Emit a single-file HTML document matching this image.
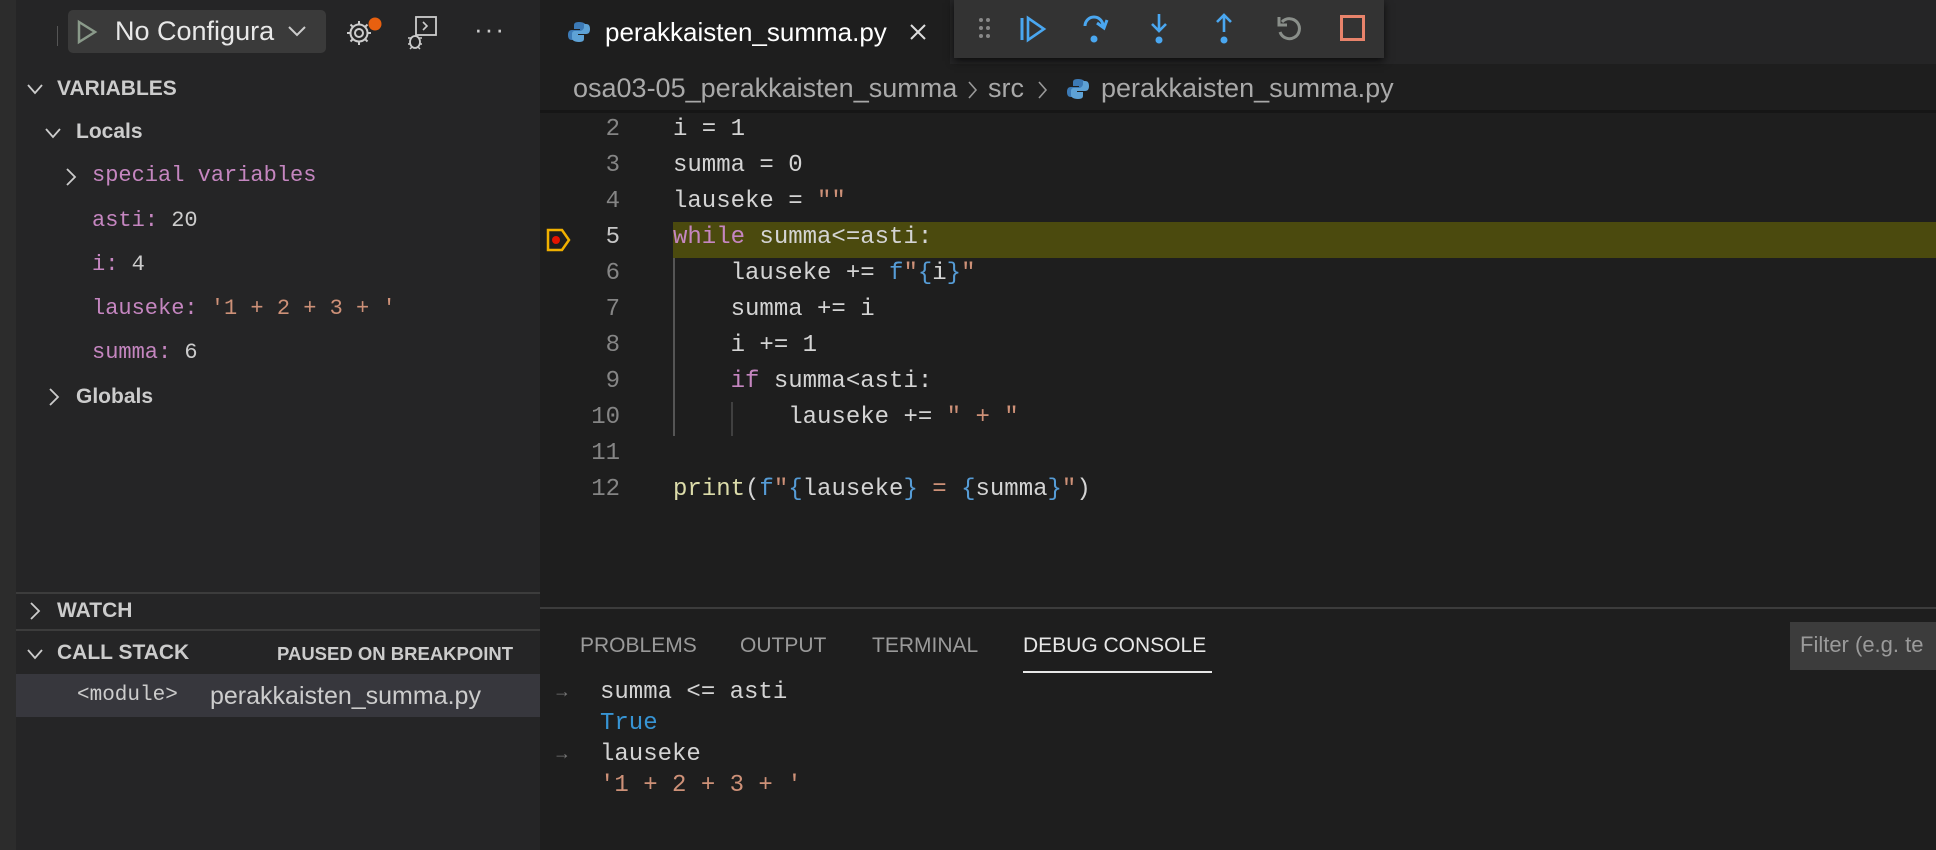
<!DOCTYPE html>
<html><head><meta charset="utf-8"><style>
*{margin:0;padding:0;box-sizing:border-box}
body{width:1936px;height:850px;background:#1e1e1e;position:relative;overflow:hidden;font-family:"Liberation Sans",sans-serif;color:#ccc}
.a{position:absolute;white-space:pre}
.m{font-family:"Liberation Mono",monospace}
.code{font-family:"Liberation Mono",monospace;font-size:24px;color:#d4d4d4;line-height:36px;height:36px;left:673px}
.ln{font-family:"Liberation Mono",monospace;font-size:24px;color:#858585;line-height:36px;width:60px;text-align:right;left:560px}
.k{color:#c586c0}.s{color:#ce9178}.b{color:#569cd6}.y{color:#dcdcaa}.n{color:#b5cea8}
.pu{color:#c586c0}.or{color:#ce9178}
.bc{font-size:26px;color:#a9a9a9;top:73px}
</style></head><body>
<div class="a" style="left:0;top:0;width:16px;height:850px;background:#2c2c2c"></div>
<div class="a" style="left:16px;top:0;width:524px;height:850px;background:#252526"></div>
<div class="a" style="left:57px;top:26px;width:1px;height:20px;background:#555"></div>
<div class="a" style="left:68px;top:10px;width:258px;height:43px;background:#3a3a3a;border-radius:5px"></div>
<svg class="a" style="left:76px;top:19px" width="22" height="26"><path d="M3 3 L19 13 L3 23 Z" fill="none" stroke="#8a9a8a" stroke-width="2.5"/></svg>
<div class="a" style="left:115px;top:16px;font-size:27px;color:#e8e8e8">No Configura</div>
<svg class="a" style="left:287px;top:24px" width="20" height="14"><path d="M2 3 L10 11 L18 3" fill="none" stroke="#ccc" stroke-width="2"/></svg>
<svg class="a" style="left:344px;top:14px" width="42" height="36"><g transform="translate(15,19)" fill="none" stroke="#ccc" stroke-width="2"><circle r="4"/><path d="M0-12v4M0 8v4M-12 0h4M8 0h4M-8.5-8.5l3 3M5.5 5.5l3 3M-8.5 8.5l3-3M5.5-5.5l3-3"/><circle r="8.5"/></g><circle cx="31" cy="10" r="6.5" fill="#e8600f"/></svg>
<svg class="a" style="left:406px;top:14px" width="34" height="38"><rect x="10" y="3" width="20" height="18" fill="none" stroke="#ccc" stroke-width="1.8"/><path d="M17 8 L21 12 L17 16" fill="none" stroke="#ccc" stroke-width="1.6"/><ellipse cx="9" cy="28" rx="5" ry="6" fill="none" stroke="#ccc" stroke-width="1.8"/><path d="M2 24h3M13 24h3M2 30h3M13 30h3M4 35l2-2M14 35l-2-2" stroke="#ccc" stroke-width="1.5"/></svg>
<div class="a" style="left:474px;top:14px;font-size:26px;color:#ccc;letter-spacing:2px">···</div>
<svg class="a" style="left:26px;top:82px" width="18" height="14"><path d="M2 3 L9 11 L16 3" fill="none" stroke="#ccc" stroke-width="1.8"/></svg>
<div class="a" style="left:57px;top:77px;font-size:21px;font-weight:bold;color:#ccc">VARIABLES</div>
<svg class="a" style="left:44px;top:126px" width="18" height="14"><path d="M2 3 L9 11 L16 3" fill="none" stroke="#ccc" stroke-width="1.8"/></svg>
<div class="a" style="left:76px;top:120px;font-size:21px;font-weight:bold;color:#ccc">Locals</div>
<svg class="a" style="left:64px;top:167px" width="14" height="20"><path d="M3 2 L11 10 L3 18" fill="none" stroke="#ccc" stroke-width="1.8"/></svg>
<div class="a m" style="left:92px;top:163px;font-size:22px"><span class="pu">special variables</span></div>
<div class="a m" style="left:92px;top:208px;font-size:22px"><span class="pu">asti:</span> <span style="color:#ccc">20</span></div>
<div class="a m" style="left:92px;top:252px;font-size:22px"><span class="pu">i:</span> <span style="color:#ccc">4</span></div>
<div class="a m" style="left:92px;top:296px;font-size:22px"><span class="pu">lauseke:</span> <span class="or">'1 + 2 + 3 + '</span></div>
<div class="a m" style="left:92px;top:340px;font-size:22px"><span class="pu">summa:</span> <span style="color:#ccc">6</span></div>
<svg class="a" style="left:47px;top:387px" width="14" height="20"><path d="M3 2 L11 10 L3 18" fill="none" stroke="#ccc" stroke-width="1.8"/></svg>
<div class="a" style="left:76px;top:385px;font-size:21px;font-weight:bold;color:#ccc">Globals</div>
<div class="a" style="left:16px;top:592px;width:524px;height:2px;background:#3c3c3c"></div>
<svg class="a" style="left:28px;top:601px" width="14" height="20"><path d="M3 2 L11 10 L3 18" fill="none" stroke="#ccc" stroke-width="1.8"/></svg>
<div class="a" style="left:57px;top:599px;font-size:21px;font-weight:bold;color:#ccc">WATCH</div>
<div class="a" style="left:16px;top:629px;width:524px;height:2px;background:#3c3c3c"></div>
<svg class="a" style="left:26px;top:647px" width="18" height="14"><path d="M2 3 L9 11 L16 3" fill="none" stroke="#ccc" stroke-width="1.8"/></svg>
<div class="a" style="left:57px;top:641px;font-size:21px;font-weight:bold;color:#ccc">CALL STACK</div>
<div class="a" style="left:277px;top:643px;font-size:18.5px;font-weight:bold;color:#ccc">PAUSED ON BREAKPOINT</div>
<div class="a" style="left:16px;top:674px;width:524px;height:43px;background:#37373d"></div>
<div class="a m" style="left:77px;top:684px;font-size:21px;color:#ccc">&lt;module&gt;</div>
<div class="a" style="left:210px;top:682px;font-size:25px;color:#ccc">perakkaisten_summa.py</div>

<div class="a" style="left:540px;top:0;width:1396px;height:64px;background:#252526"></div>
<div class="a" style="left:540px;top:0;width:410px;height:64px;background:#1e1e1e"></div>
<svg class="a" style="left:567px;top:20px" width="24" height="24"><path d="M12 2c-5 0-5 2-5 4v3h6v1H5c-3 0-4 2-4 5s1 5 4 5h2v-3c0-2 2-4 4-4h5c2 0 3-1 3-3V6c0-2-2-4-7-4z" fill="#3c7ab6"/><path d="M12 22c5 0 5-2 5-4v-3h-6v-1h8c3 0 4-2 4-5s-1-5-4-5h-2v3c0 2-2 4-4 4H8c-2 0-3 1-3 3v4c0 2 2 4 7 4z" fill="#5ea2d6"/></svg>
<div class="a" style="left:605px;top:17px;font-size:26px;color:#fff">perakkaisten_summa.py</div>
<svg class="a" style="left:908px;top:22px" width="20" height="20"><path d="M3 3L17 17M17 3L3 17" stroke="#ddd" stroke-width="2"/></svg>
<div class="a bc" style="left:573px;font-size:27px">osa03-05_perakkaisten_summa</div>
<svg class="a" style="left:966px;top:80px" width="14" height="20"><path d="M3 2 L10 10 L3 18" fill="none" stroke="#999" stroke-width="1.6"/></svg>
<div class="a bc" style="left:988px;font-size:27px">src</div>
<svg class="a" style="left:1036px;top:80px" width="14" height="20"><path d="M3 2 L10 10 L3 18" fill="none" stroke="#999" stroke-width="1.6"/></svg>
<svg class="a" style="left:1067px;top:78px" width="22" height="22"><path d="M11 1c-5 0-5 2-5 4v3h6v1H4c-3 0-4 2-4 5s1 5 4 5h2v-3c0-2 2-4 4-4h5c2 0 3-1 3-3V5c0-2-2-4-7-4z" fill="#3c7ab6"/><path d="M11 21c5 0 5-2 5-4v-3h-6v-1h8c3 0 4-2 4-5s-1-5-4-5h-2v3c0 2-2 4-4 4H7c-2 0-3 1-3 3v4c0 2 2 4 7 4z" fill="#5ea2d6"/></svg>
<div class="a bc" style="left:1101px;font-size:27px">perakkaisten_summa.py</div>
<div class="a" style="left:540px;top:110px;width:1396px;height:3px;background:#161616"></div>

<div class="a" style="left:954px;top:0;width:430px;height:58px;background:#333333;box-shadow:0 3px 8px rgba(0,0,0,.7)"></div>
<svg class="a" style="left:978px;top:16px" width="14" height="24"><g fill="#888"><circle cx="3" cy="4" r="2"/><circle cx="10" cy="4" r="2"/><circle cx="3" cy="12" r="2"/><circle cx="10" cy="12" r="2"/><circle cx="3" cy="20" r="2"/><circle cx="10" cy="20" r="2"/></g></svg>
<svg class="a" style="left:1018px;top:14px" width="30" height="30"><path d="M4 4v22" stroke="#4aa7f0" stroke-width="3"/><path d="M10 4 L26 15 L10 26 Z" fill="none" stroke="#4aa7f0" stroke-width="2.6"/></svg>
<svg class="a" style="left:1080px;top:12px" width="30" height="34"><path d="M5 14a9 9 0 0 1 18 0" fill="none" stroke="#4aa7f0" stroke-width="3"/><path d="M17 11 L24 16 L27 8" fill="none" stroke="#4aa7f0" stroke-width="3"/><circle cx="14" cy="27" r="3.5" fill="#4aa7f0"/></svg>
<svg class="a" style="left:1147px;top:12px" width="24" height="34"><path d="M12 2v16M5 12l7 7 7-7" fill="none" stroke="#4aa7f0" stroke-width="2.6"/><circle cx="12" cy="28" r="3.5" fill="#4aa7f0"/></svg>
<svg class="a" style="left:1212px;top:12px" width="24" height="34"><path d="M12 20V4M5 10l7-7 7 7" fill="none" stroke="#4aa7f0" stroke-width="2.6"/><circle cx="12" cy="28" r="3.5" fill="#4aa7f0"/></svg>
<svg class="a" style="left:1274px;top:13px" width="30" height="30"><path d="M8 9a10 10 0 1 1-2 10" fill="none" stroke="#8a8f8a" stroke-width="3"/><path d="M5 4v8h8" fill="none" stroke="#8a8f8a" stroke-width="3"/></svg>
<div class="a" style="left:1340px;top:15px;width:25px;height:26px;border:3px solid #e8836b"></div>

<div class="a" style="left:673px;top:222px;width:1263px;height:36px;background:#4b4a0e"></div>
<div class="a" style="left:673px;top:258px;width:2px;height:178px;background:#555"></div>
<div class="a" style="left:731px;top:402px;width:2px;height:34px;background:#404040"></div>
<svg class="a" style="left:545px;top:228px" width="28" height="24"><path d="M3 2h14l7 10-7 10H3z" fill="none" stroke="#f0b000" stroke-width="2.5"/><circle cx="11" cy="12" r="4" fill="#e51400"/></svg>
<div class="a ln" style="top:112px">2</div><div class="a code" style="top:112px">i = 1</div>
<div class="a ln" style="top:148px">3</div><div class="a code" style="top:148px">summa = 0</div>
<div class="a ln" style="top:184px">4</div><div class="a code" style="top:184px">lauseke = <span class="s">""</span></div>
<div class="a ln" style="top:220px;color:#c6c6c6">5</div><div class="a code" style="top:220px"><span class="k">while</span> summa&lt;=asti:</div>
<div class="a ln" style="top:256px">6</div><div class="a code" style="top:256px">    lauseke += <span class="b">f</span><span class="s">"</span><span class="b">{</span>i<span class="b">}</span><span class="s">"</span></div>
<div class="a ln" style="top:292px">7</div><div class="a code" style="top:292px">    summa += i</div>
<div class="a ln" style="top:328px">8</div><div class="a code" style="top:328px">    i += 1</div>
<div class="a ln" style="top:364px">9</div><div class="a code" style="top:364px">    <span class="k">if</span> summa&lt;asti:</div>
<div class="a ln" style="top:400px">10</div><div class="a code" style="top:400px">        lauseke += <span class="s">" + "</span></div>
<div class="a ln" style="top:436px">11</div>
<div class="a ln" style="top:472px">12</div><div class="a code" style="top:472px"><span class="y">print</span>(<span class="b">f</span><span class="s">"</span><span class="b">{</span>lauseke<span class="b">}</span><span class="s"> = </span><span class="b">{</span>summa<span class="b">}</span><span class="s">"</span>)</div>

<div class="a" style="left:540px;top:607px;width:1396px;height:2px;background:#3c3c3c"></div>
<div class="a" style="left:580px;top:634px;font-size:21px;color:#9a9a9a">PROBLEMS</div>
<div class="a" style="left:740px;top:634px;font-size:21px;color:#9a9a9a">OUTPUT</div>
<div class="a" style="left:872px;top:634px;font-size:21px;color:#9a9a9a">TERMINAL</div>
<div class="a" style="left:1023px;top:634px;font-size:21px;color:#e7e7e7">DEBUG CONSOLE</div>
<div class="a" style="left:1023px;top:671px;width:189px;height:2px;background:#e7e7e7"></div>
<div class="a" style="left:1790px;top:622px;width:146px;height:48px;background:#3c3c3c"></div>
<div class="a" style="left:1800px;top:632px;font-size:22px;color:#9a9a9a">Filter (e.g. te</div>
<div class="a" style="left:553px;top:681px;font-size:18px;color:#777">→</div>
<div class="a m" style="left:600px;top:679px;font-size:24px;color:#d4d4d4">summa &lt;= asti</div>
<div class="a m" style="left:600px;top:710px;font-size:24px;color:#3794d4">True</div>
<div class="a" style="left:553px;top:743px;font-size:18px;color:#777">→</div>
<div class="a m" style="left:600px;top:741px;font-size:24px;color:#d4d4d4">lauseke</div>
<div class="a m" style="left:600px;top:772px;font-size:24px;color:#ce9178">'1 + 2 + 3 + '</div>
</body></html>
